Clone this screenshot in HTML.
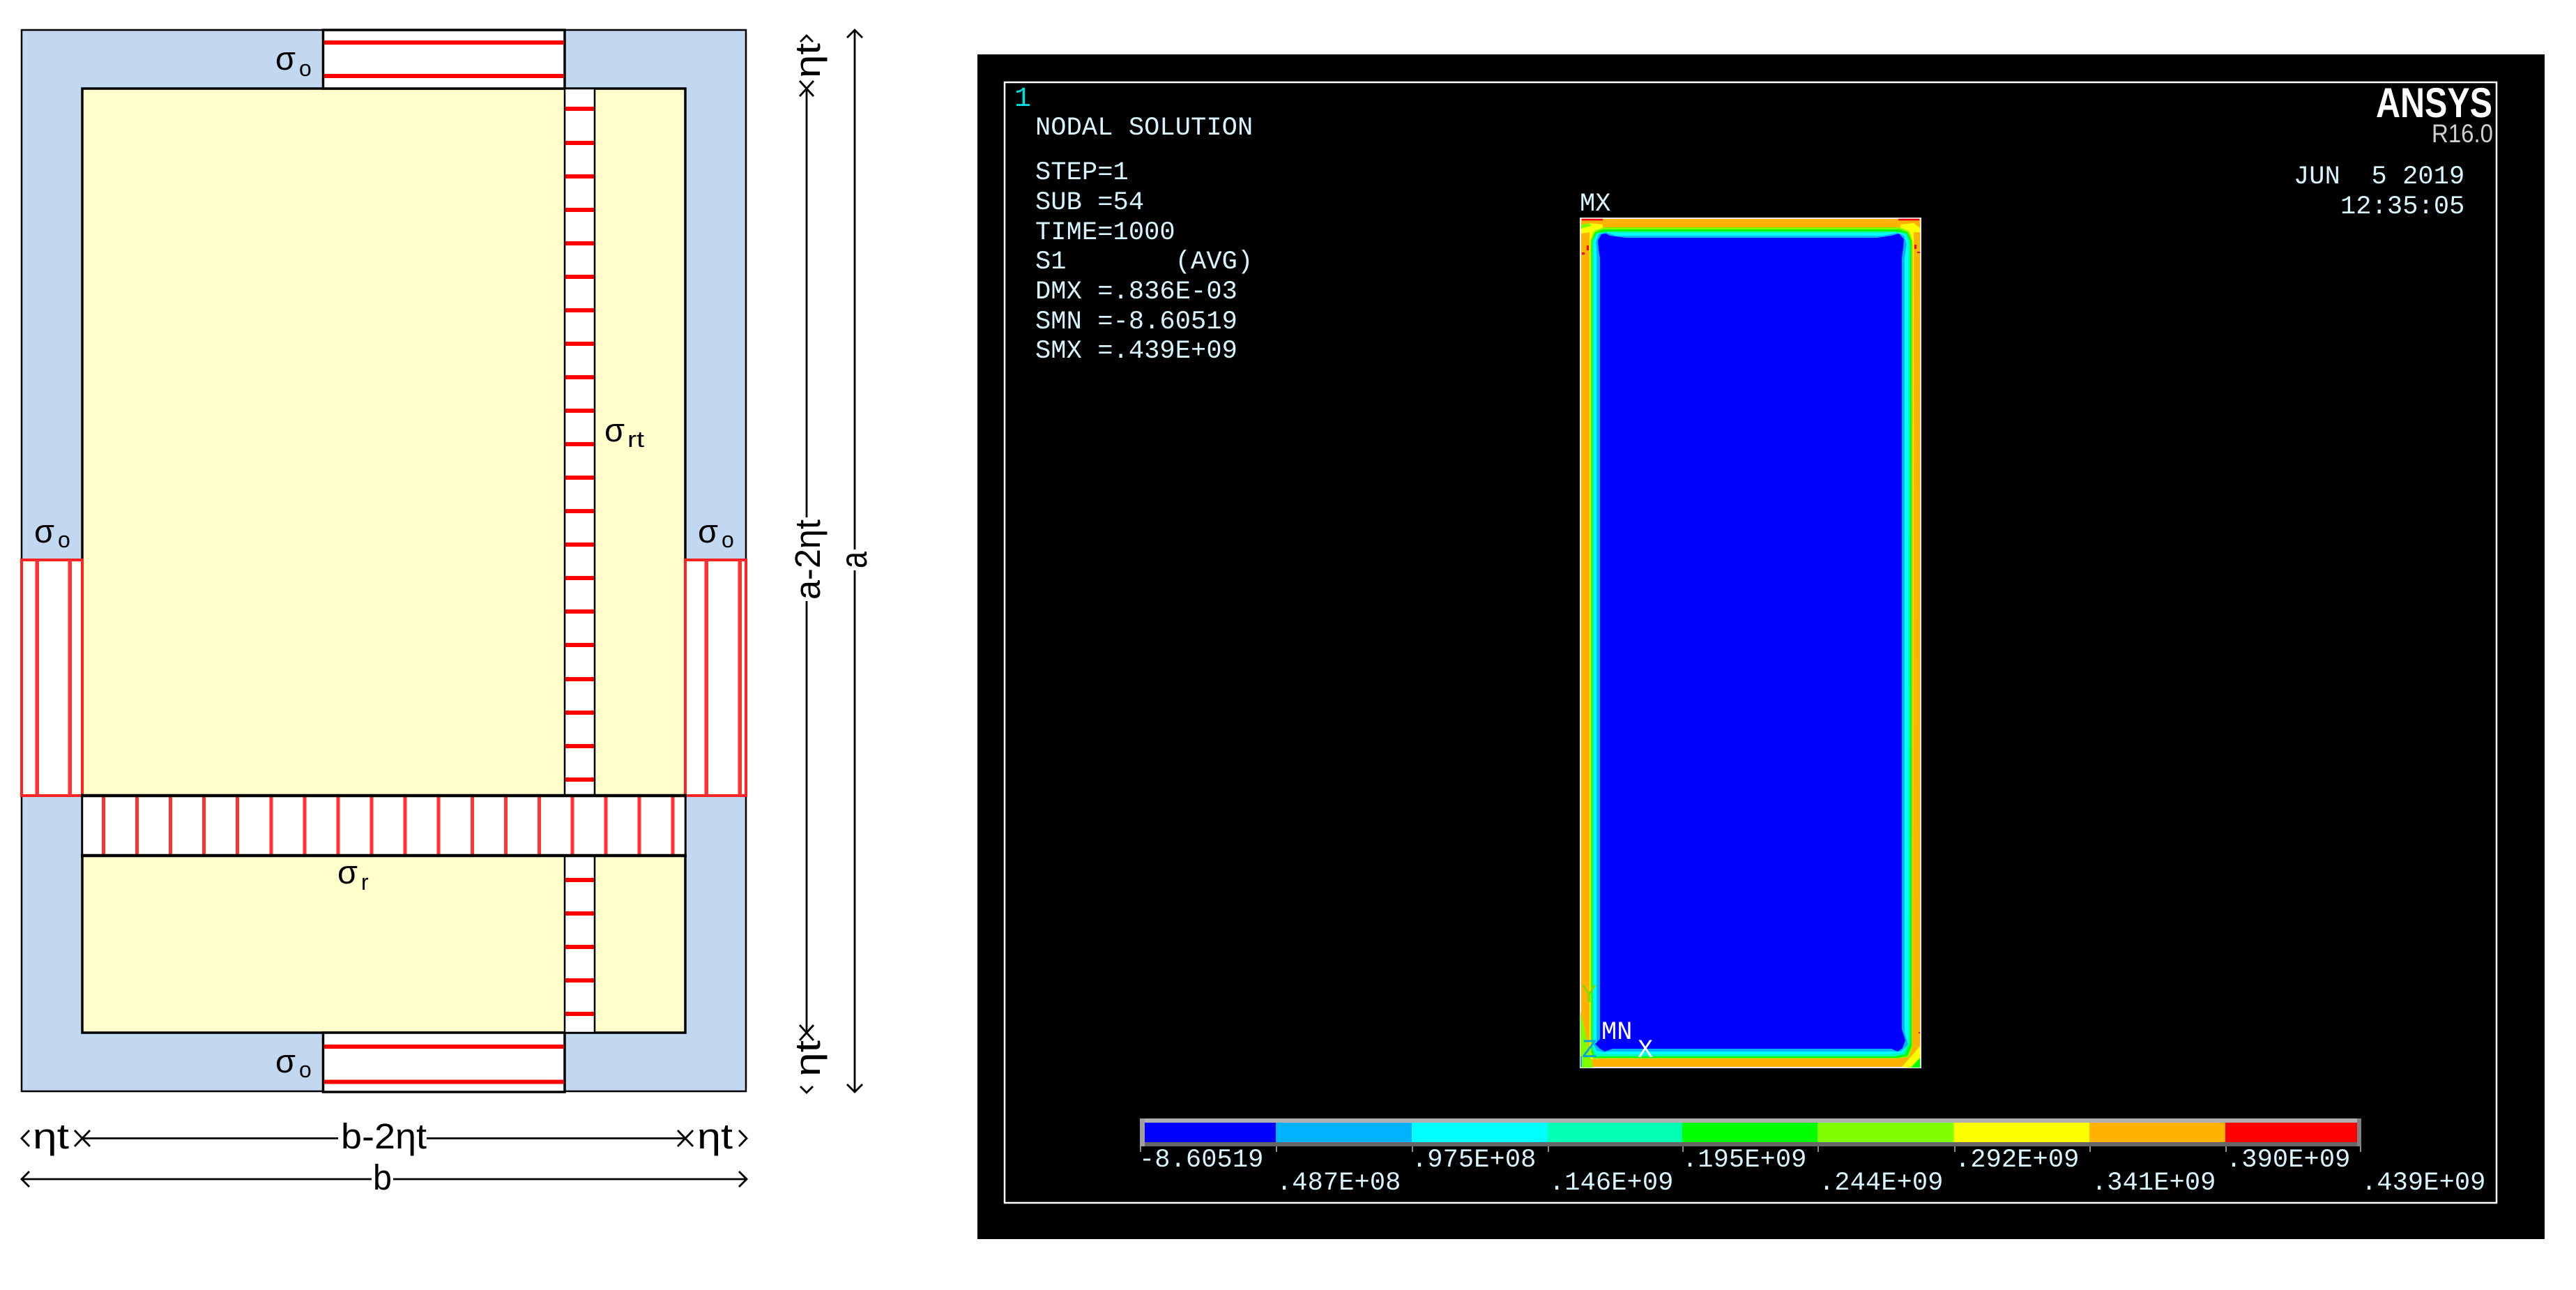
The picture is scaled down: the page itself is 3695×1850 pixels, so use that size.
<!DOCTYPE html>
<html><head><meta charset="utf-8"><title>Stress diagram and ANSYS nodal solution</title>
<style>
html,body{margin:0;padding:0;background:#fff}
svg{display:block}
.s{font-family:"Liberation Sans",sans-serif;fill:#000}
.m{font-family:"Liberation Mono",monospace;font-size:37px;fill:#d8f4ff;letter-spacing:.1px}
</style></head><body>
<svg xmlns="http://www.w3.org/2000/svg" width="3695" height="1850" viewBox="0 0 3695 1850">
<rect width="3695" height="1850" fill="#fff"/>
<!-- left diagram -->
<rect x="31" y="43" width="1039" height="1522" fill="#c2d8f0" stroke="#000" stroke-width="2.500"/>
<rect x="118" y="127" width="865" height="1354" fill="#ffffcc" stroke="#000" stroke-width="3.500"/>
<!-- top/bottom white boxes -->
<rect x="463.500" y="43" width="346.500" height="84" fill="#fff" stroke="#000" stroke-width="3.500"/>
<rect x="463.500" y="1481" width="346.500" height="85" fill="#fff" stroke="#000" stroke-width="3.500"/>
<g fill="#f00">
<rect x="465" y="58" width="344" height="6"/><rect x="465" y="106" width="344" height="6"/>
<rect x="465" y="1548.500" width="344" height="6"/><rect x="465" y="1498" width="344" height="6"/>
</g>
<!-- vertical strip -->
<rect x="810" y="127" width="43" height="1354" fill="#fff" stroke="#000" stroke-width="2.500"/>
<g fill="#f00">
<rect x="811" y="153" width="41" height="6"/><rect x="811" y="202" width="41" height="6"/><rect x="811" y="250" width="41" height="6"/><rect x="811" y="298" width="41" height="6"/><rect x="811" y="346" width="41" height="6"/><rect x="811" y="394" width="41" height="6"/><rect x="811" y="442" width="41" height="6"/><rect x="811" y="490" width="41" height="6"/><rect x="811" y="538" width="41" height="6"/><rect x="811" y="586" width="41" height="6"/><rect x="811" y="634" width="41" height="6"/><rect x="811" y="682" width="41" height="6"/><rect x="811" y="730" width="41" height="6"/><rect x="811" y="778" width="41" height="6"/><rect x="811" y="826" width="41" height="6"/><rect x="811" y="874" width="41" height="6"/><rect x="811" y="922" width="41" height="6"/><rect x="811" y="971" width="41" height="6"/><rect x="811" y="1019" width="41" height="6"/><rect x="811" y="1067" width="41" height="6"/><rect x="811" y="1115" width="41" height="6"/>
<rect x="811" y="1259" width="41" height="6"/><rect x="811" y="1307" width="41" height="6"/><rect x="811" y="1355" width="41" height="6"/><rect x="811" y="1403" width="41" height="6"/><rect x="811" y="1451" width="41" height="6"/>
</g>
<!-- side boxes -->
<rect x="31" y="803" width="87" height="338" fill="#fff" stroke="#f22" stroke-width="4"/>
<rect x="983" y="803" width="87" height="338" fill="#fff" stroke="#f22" stroke-width="4"/>
<g fill="#f33">
<rect x="50.500" y="803" width="5.500" height="338"/><rect x="97.500" y="803" width="5.500" height="338"/>
<rect x="1010.500" y="803" width="5.500" height="338"/><rect x="1058.500" y="803" width="5.500" height="338"/>
</g>
<!-- horizontal band -->
<rect x="118" y="1141" width="865" height="86" fill="#fff"/>
<g fill="#f33">
<rect x="146" y="1141" width="5" height="86"/><rect x="194" y="1141" width="5" height="86"/><rect x="242" y="1141" width="5" height="86"/><rect x="290" y="1141" width="5" height="86"/><rect x="338" y="1141" width="5" height="86"/><rect x="386.500" y="1141" width="5" height="86"/><rect x="434.500" y="1141" width="5" height="86"/><rect x="482.500" y="1141" width="5" height="86"/><rect x="530.500" y="1141" width="5" height="86"/><rect x="578.500" y="1141" width="5" height="86"/><rect x="626.500" y="1141" width="5" height="86"/><rect x="675" y="1141" width="5" height="86"/><rect x="723" y="1141" width="5" height="86"/><rect x="771" y="1141" width="5" height="86"/><rect x="818.500" y="1141" width="5" height="86"/><rect x="866.500" y="1141" width="5" height="86"/><rect x="914.500" y="1141" width="5" height="86"/><rect x="962.500" y="1141" width="5" height="86"/>
</g>
<path d="M116 1141H985M116 1227H985" stroke="#000" stroke-width="4.500" fill="none"/>
<path d="M118 1141V1227M983 1141V1227" stroke="#000" stroke-width="2.500" fill="none"/>
<!-- labels -->
<g class="s">
<text x="395" y="100" font-size="47">σ</text><text x="429" y="109" font-size="32">o</text>
<text x="395" y="1538" font-size="47">σ</text><text x="429" y="1545" font-size="32">o</text>
<text x="49" y="778" font-size="47">σ</text><text x="83" y="785" font-size="32">o</text>
<text x="1001" y="778" font-size="47">σ</text><text x="1035" y="785" font-size="32">o</text>
<text x="867" y="633" font-size="47">σ</text><text x="900" y="641" font-size="32" textLength="24" lengthAdjust="spacingAndGlyphs">rt</text>
<text x="484" y="1267" font-size="47">σ</text><text x="518" y="1276" font-size="32">r</text>
</g>
<!-- dimension lines -->
<g fill="none" stroke="#000" stroke-width="2.800">
<path d="M1226 43V1565M1215 54L1226 43L1237 54M1215 1555L1226 1566L1237 1555"/>
<path d="M1157 127V742M1157 862V1481M1148 60L1157 51L1166 60M1148 1558L1157 1567L1166 1558M1147 116L1167 138M1167 116L1147 138M1147 1470L1167 1492M1167 1470L1147 1492"/>
<path d="M118 1632.500H485M612 1632.500H983M42 1621L31 1632.500L42 1644M1060 1621L1071 1632.500L1060 1644M107 1621L129 1644M129 1621L107 1644M972 1621L994 1644M994 1621L972 1644"/>
<path d="M31 1691H533M564 1691H1071M42 1680L31 1691L42 1702M1060 1680L1071 1691L1060 1702"/>
</g>
<rect x="1210" y="788" width="40" height="30" fill="#fff"/>
<g class="s" font-size="51">
<text transform="translate(1243,815) rotate(-90)" font-size="54" textLength="24" lengthAdjust="spacingAndGlyphs">a</text>
<text transform="translate(1176,860) rotate(-90)" textLength="115" lengthAdjust="spacingAndGlyphs">a-2ηt</text>
<text transform="translate(1176,112) rotate(-90)" textLength="50" lengthAdjust="spacingAndGlyphs">ηt</text>
<text transform="translate(1176,1544) rotate(-90)" textLength="52" lengthAdjust="spacingAndGlyphs">ηt</text>
<text x="47" y="1647" textLength="52" lengthAdjust="spacingAndGlyphs">ηt</text>
<text x="1000" y="1647" textLength="51" lengthAdjust="spacingAndGlyphs">ηt</text>
<text x="489" y="1647" textLength="123" lengthAdjust="spacingAndGlyphs">b-2ηt</text>
<text x="535" y="1706" textLength="27" lengthAdjust="spacingAndGlyphs">b</text>
</g>
<!-- ANSYS panel -->
<rect x="1402" y="78" width="2248" height="1699" fill="#000"/>
<rect x="1441" y="118" width="2140" height="1607" fill="none" stroke="#fff" stroke-width="2.500"/>
<text x="1455" y="152" font-family="'Liberation Mono',monospace" font-size="40" fill="#00dddd">1</text>
<g class="m">
<text x="1485" y="193">NODAL SOLUTION</text>
<text x="1485" y="257">STEP=1</text>
<text x="1485" y="300">SUB =54</text>
<text x="1485" y="343">TIME=1000</text>
<text x="1485" y="385">S1&#160;&#160;&#160;&#160;&#160;&#160;&#160;(AVG)</text>
<text x="1485" y="428">DMX =.836E-03</text>
<text x="1485" y="471">SMN =-8.60519</text>
<text x="1485" y="513">SMX =.439E+09</text>
<text x="3290" y="263">JUN&#160;&#160;5 2019</text>
<text x="3357" y="306">12:35:05</text>
<text x="2266" y="302">MX</text>
</g>
<text x="3408" y="168" font-family="'Liberation Sans',sans-serif" font-weight="700" font-size="60" fill="#fff" textLength="167" lengthAdjust="spacingAndGlyphs">ANSYS</text>
<text x="3488" y="204" font-family="'Liberation Sans',sans-serif" font-size="37" fill="#d0d0d0" textLength="88" lengthAdjust="spacingAndGlyphs">R16.0</text>
<!-- contour plot -->
<rect x="2267" y="313" width="488" height="1218" fill="#ffb200" stroke="#e8e8e8" stroke-width="2"/>
<path d="M2268 327L2280 320L2299 322L2299 328L2290 334L2285 352V1519H2744V352L2740 334L2726 328V322L2745 320L2754 327V333L2745 333L2744 1519H2733L2728 1530L2744 1512L2754 1500L2754 1530H2728L2733 1519L2280 1519L2285 1530H2280L2280 333L2268 335Z" fill="#ffff00"/>
<path d="M2268 322L2280 320L2282 324L2268 328Z" fill="#80ff00"/>
<path d="M2281 1500V345L2287 331L2300 326H2724L2738 331L2743 345V1500L2738 1516L2722 1518H2297L2286 1519L2281 1512Z" fill="#80ff00"/>
<path d="M2283 1500V345L2288 333L2300 329H2724L2736 333L2742 345V1500L2736 1514L2722 1517H2297L2287 1517L2283 1510Z" fill="#00ff00"/>
<path d="M2284 1495V345L2290 334L2308 332H2716L2734 334L2740 345V1495L2733 1512L2718 1515H2300L2288 1515L2284 1505Z" fill="#00ffb2"/>
<path d="M2286 1495V348L2291 335L2302 333L2335 334H2690L2722 333L2734 336L2737 350V1490L2730 1510L2710 1512H2310L2290 1511L2286 1503Z" fill="#00ffff"/>
<path d="M2290 1495V358L2289 347L2293 336L2303 333L2318 338H2700L2722 334L2731 338L2735 350L2732 370V1480L2737 1498L2727 1508H2310L2300 1509L2290 1507L2286 1498Z" fill="#00b2ff"/>
<path d="M2295 1490V370L2293 357L2292 345L2297 336L2304 335L2309 338L2331 341H2693L2713 338L2724 335L2731 343L2730 355L2728 370V1476L2733 1492L2729 1503L2722 1508L2713 1504H2313L2302 1508L2295 1504L2288 1497Z" fill="#0000ff"/>
<path d="M2267 1450L2285 1531H2267Z" fill="#80ff00"/>
<path d="M2732 1531L2754 1500V1531Z" fill="#ffff00"/>
<path d="M2741 1531L2754 1517V1531Z" fill="#00ff00"/>
<rect x="2267" y="1515" width="2" height="15" fill="#00b2ff"/>
<path d="M2269 315H2299M2723 315H2753" stroke="#f00" stroke-width="2.500"/>
<g fill="#f00"><rect x="2276" y="352" width="3" height="7"/><rect x="2269" y="362" width="4" height="3"/><rect x="2746" y="351" width="3" height="6"/><rect x="2750" y="361" width="4" height="2"/><rect x="2752" y="1480" width="2" height="2"/></g>
<text x="2268" y="1437" font-family="'Liberation Mono',monospace" font-size="37" fill="#8cd400">Y</text>
<text x="2269" y="1516" font-family="'Liberation Mono',monospace" font-size="37" fill="#00aadd">Z</text>
<text x="2349" y="1516" class="m" style="fill:#fff">X</text>
<text x="2297" y="1490" class="m" style="fill:#fff">MN</text>
<!-- legend -->
<rect x="1635" y="1604" width="1752" height="6" fill="#b0b0b0"/>
<rect x="1635" y="1638" width="1752" height="6" fill="#666"/>
<rect x="1635" y="1604" width="7" height="40" fill="#a0a0a0"/>
<rect x="3381" y="1604" width="6" height="40" fill="#808080"/>
<rect x="1642" y="1610" width="188" height="28" fill="#0000ff"/>
<rect x="1830" y="1610" width="195" height="28" fill="#00b2ff"/>
<rect x="2025" y="1610" width="195" height="28" fill="#00ffff"/>
<rect x="2220" y="1610" width="193" height="28" fill="#00ffb2"/>
<rect x="2413" y="1610" width="194" height="28" fill="#00ff00"/>
<rect x="2607" y="1610" width="195.500" height="28" fill="#80ff00"/>
<rect x="2802.500" y="1610" width="194.500" height="28" fill="#ffff00"/>
<rect x="2997" y="1610" width="195" height="28" fill="#ffb200"/>
<rect x="3192" y="1610" width="189" height="28" fill="#ff0000"/>
<path d="M1636 1644v8M1831 1644v8M2026 1644v8M2221 1644v8M2414 1644v8M2608 1644v8M2804 1644v8M2998 1644v8M3193 1644v8M3386 1644v8" stroke="#bbb" stroke-width="1.500" fill="none"/>
<g class="m">
<text x="1634" y="1673">-8.60519</text>
<text x="2025" y="1673">.975E+08</text>
<text x="2413" y="1673">.195E+09</text>
<text x="2804" y="1673">.292E+09</text>
<text x="3193" y="1673">.390E+09</text>
<text x="1831" y="1706">.487E+08</text>
<text x="2222" y="1706">.146E+09</text>
<text x="2609" y="1706">.244E+09</text>
<text x="3000" y="1706">.341E+09</text>
<text x="3387" y="1706">.439E+09</text>
</g>
</svg>
</body></html>
